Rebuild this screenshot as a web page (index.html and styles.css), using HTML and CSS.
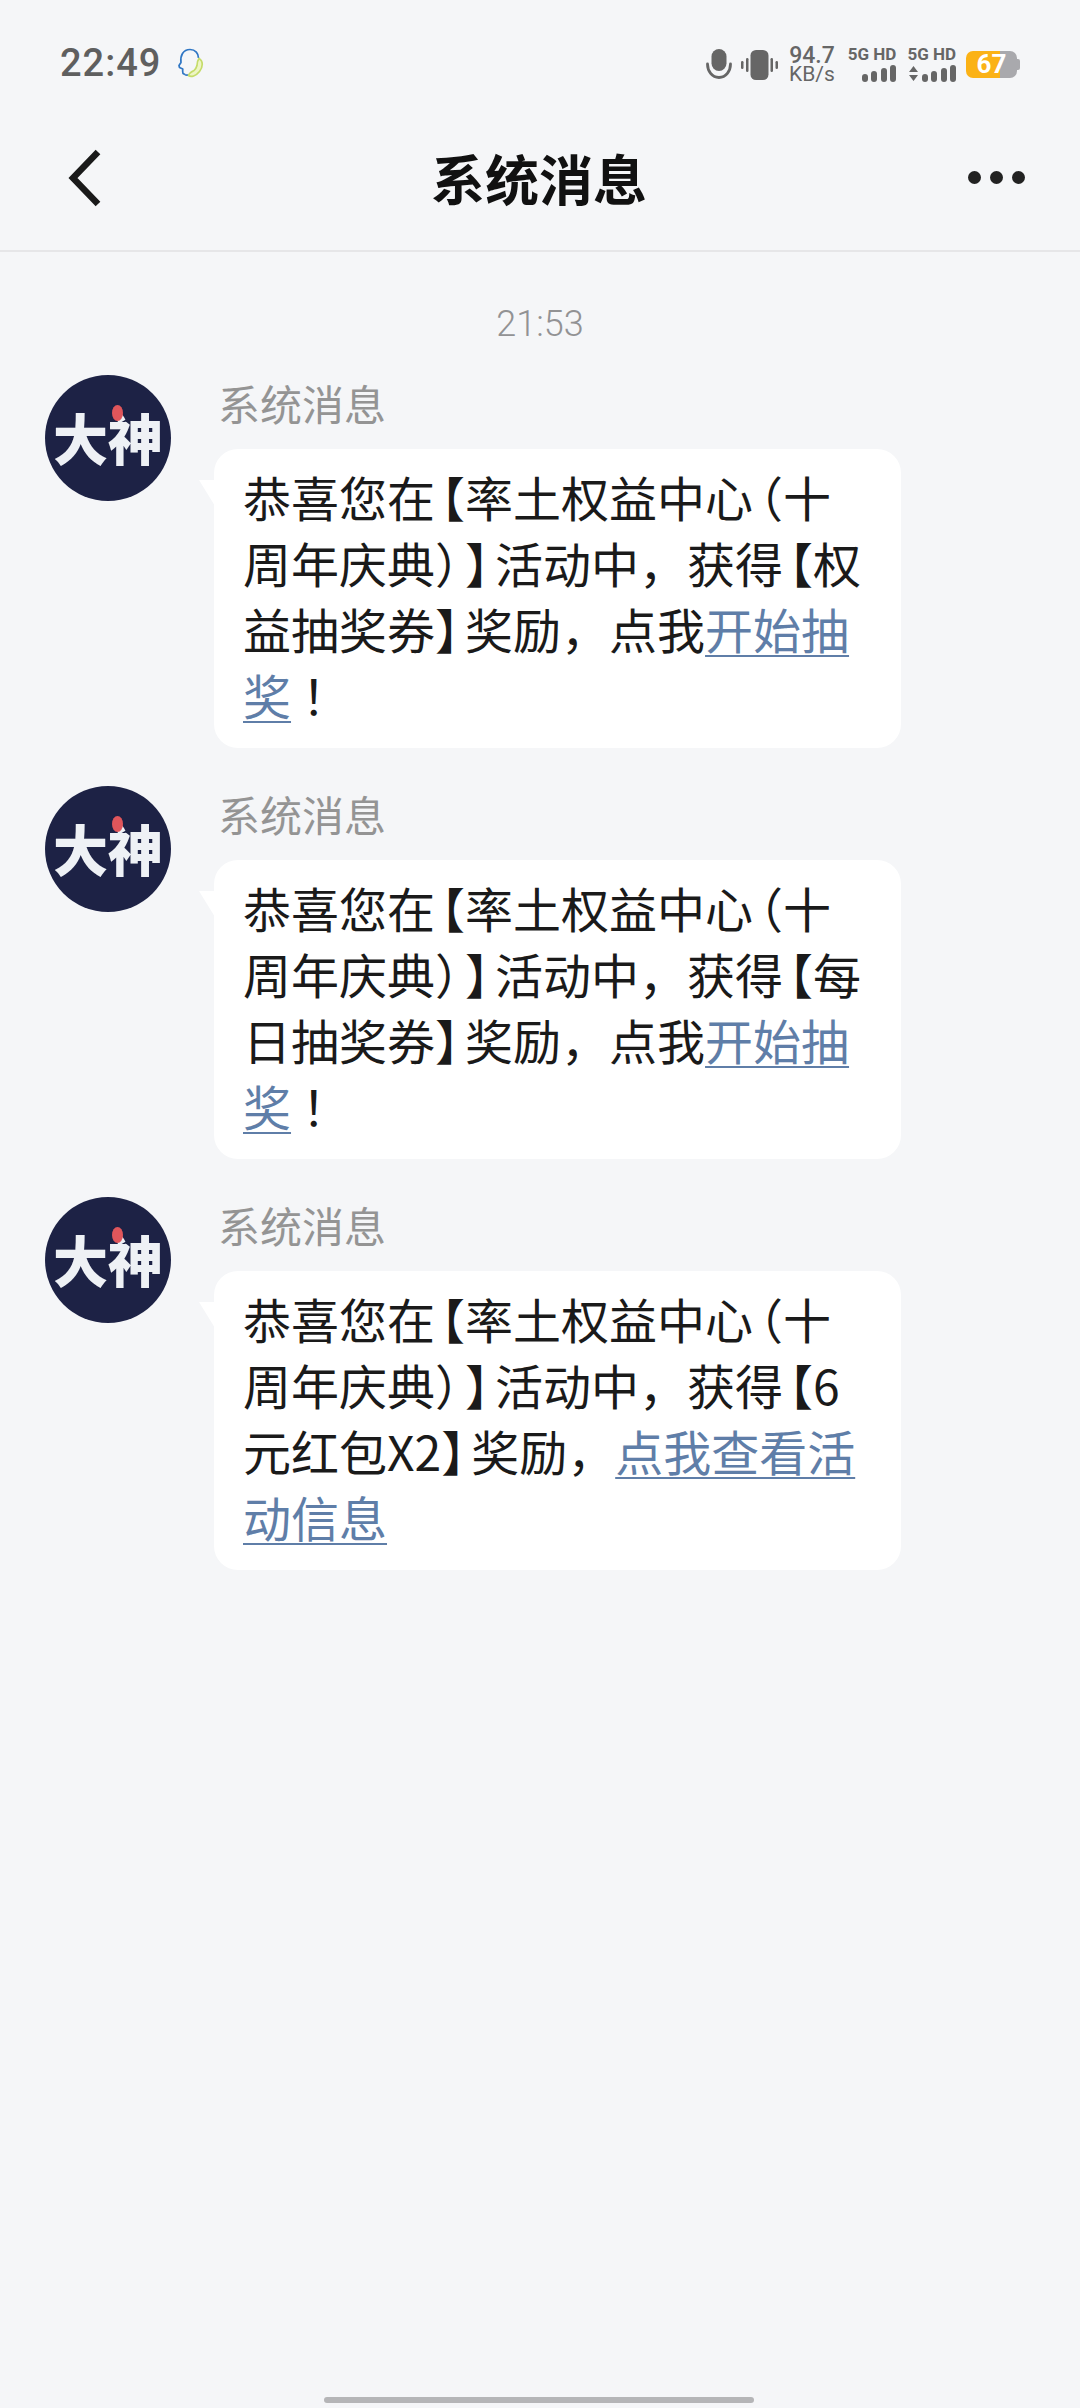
FILE: index.html
```html
<!DOCTYPE html>
<html lang="zh-CN">

<head>
    <meta charset="UTF-8">
    <title>系统消息</title>
    <link rel="stylesheet" href="styles.css">
</head>

<body>
    <div class="status">
        <div class="status-left">
            <span class="time">22:49</span>
            <svg class="qq" width="26" height="30" viewBox="0 0 26 30" fill="none">
                <path d="M7 26.500L5 25.500C4.500 24 4.500 22.500 4.800 21L1.500 19.500L1 17.500L3 14.500C2 8 5 1.500 12 1.500C17.500 1.500 20.500 5.500 20.500 10" stroke="#2f76c4" stroke-width="1.700" stroke-linejoin="round" />
                <path d="M7 26.500C8 27.500 9.500 27 11 27" stroke="#2f76c4" stroke-width="1.700" />
                <path d="M21 10.500C25.500 13 25 19 21.500 23.500C18 28 13 29.500 10.500 27.500C11 25 14 23.500 16 22.500C17.500 21 18.500 19.500 19 17.500C19 15 19.500 12.500 21 10.500Z" fill="#eef5c4" stroke="#c5dc6a" stroke-width="1.700" />
            </svg>
        </div>
        <div class="status-right">
            <svg class="mic" width="26" height="31" viewBox="0 0 26 31">
                <rect x="5.500" y="0" width="15" height="22" rx="7.500" fill="#666" />
                <path d="M1.500 15C1.500 22 6 28.500 13 28.500C20 28.500 24.500 22 24.500 15" fill="none" stroke="#666" stroke-width="2.800" stroke-linecap="round" />
            </svg>
            <svg class="vibrate" width="37" height="30" viewBox="0 0 37 30" fill="#666">
                <rect x="9.500" y="0" width="18" height="30" rx="5.500" />
                <rect x="5" y="8" width="2.500" height="14" rx="1.200" />
                <rect x="0" y="11" width="2.500" height="8" rx="1.200" />
                <rect x="29.500" y="8" width="2.500" height="14" rx="1.200" />
                <rect x="34.500" y="11" width="2.500" height="8" rx="1.200" />
            </svg>
            <div class="speed"><span>94.7</span><span>KB/s</span></div>
            <div class="sim">
                <span class="sim-name">5G HD</span>
                <svg width="34" height="17" viewBox="0 0 34 17" fill="#666">
                    <rect x="0" y="9" width="6" height="8" rx="3" />
                    <rect x="9" y="6" width="6" height="11" rx="3" />
                    <rect x="19" y="3" width="6" height="14" rx="3" />
                    <rect x="28" y="0" width="6" height="17" rx="3" />
                </svg>
            </div>
            <div class="sim">
                <span class="sim-name">5G HD</span>
                <svg width="47" height="17" viewBox="0 0 47 17" fill="#666">
                    <path d="M0 7L4.500 1L9 7ZM0 10L4.500 16L9 10Z" />
                    <rect x="13" y="9" width="6" height="8" rx="3" />
                    <rect x="22" y="6" width="6" height="11" rx="3" />
                    <rect x="32" y="3" width="6" height="14" rx="3" />
                    <rect x="41" y="0" width="6" height="17" rx="3" />
                </svg>
            </div>
            <div class="battery">
                <div class="battery-body"><span>67</span></div>
                <div class="battery-tip"></div>
            </div>
        </div>
    </div>

    <div class="nav">
        <svg class="back" width="36" height="60" viewBox="0 0 36 60" fill="none">
            <path d="M31 4L6 30L31 56" stroke="#1a1a1a" stroke-width="6.500" />
        </svg>
        <div class="title">系统消息</div>
        <div class="more"><i></i><i></i><i></i></div>
    </div>

    <div class="chat">
        <div class="stamp">21:53</div>

        <div class="msg">
            <div class="avatar"><span>大神</span><b></b></div>
            <div class="msg-body">
                <div class="name">系统消息</div>
                <div class="bubble">恭喜您在<span class="open">【</span>率土权益中心<span class="open">（</span>十周年庆典<span class="close">）</span><span class="close">】</span>活动中，获得<span class="open">【</span>权益抽奖券<span class="close">】</span>奖励，点我<a>开始抽奖</a> ！</div>
            </div>
        </div>

        <div class="msg">
            <div class="avatar"><span>大神</span><b></b></div>
            <div class="msg-body">
                <div class="name">系统消息</div>
                <div class="bubble">恭喜您在<span class="open">【</span>率土权益中心<span class="open">（</span>十周年庆典<span class="close">）</span><span class="close">】</span>活动中，获得<span class="open">【</span>每日抽奖券<span class="close">】</span>奖励，点我<a>开始抽奖</a> ！</div>
            </div>
        </div>

        <div class="msg">
            <div class="avatar"><span>大神</span><b></b></div>
            <div class="msg-body">
                <div class="name">系统消息</div>
                <div class="bubble">恭喜您在<span class="open">【</span>率土权益中心<span class="open">（</span>十周年庆典<span class="close">）</span><span class="close">】</span>活动中，获得<span class="open">【</span>6元红包X2<span class="close">】</span>奖励，<a>点我查看活动信息</a></div>
            </div>
        </div>
    </div>

    <div class="home-bar"></div>
</body>

</html>
```

FILE: styles.css
```css
* {
    padding: 0;
    margin: 0;
    box-sizing: border-box;
}

body {
    width: 1080px;
    height: 2408px;
    background: #f5f6f8;
    font-family: "Noto Sans CJK SC", "Noto Sans", sans-serif;
    color: #1a1a1a;
    display: flex;
    flex-direction: column;
    overflow: hidden;
}

/* 状态栏 */
.status {
    height: 126px;
    padding: 0 60px 0 60px;
    display: flex;
    align-items: center;
    justify-content: space-between;
    color: #666;
}

.status-left {
    display: flex;
    align-items: center;
    gap: 17px;
}

.time {
    font-family: Roboto, sans-serif;
    font-size: 38px;
    font-weight: 500;
    letter-spacing: 1px;
    color: #5f5f5f;
}

.status-right {
    display: flex;
    align-items: center;
    padding-top: 3px;
}

.vibrate {
    margin-left: 9px;
}

.speed {
    margin-left: 11px;
    width: 46px;
    display: flex;
    flex-direction: column;
    align-items: flex-end;
    font-family: Roboto, sans-serif;
    font-size: 23px;
    line-height: 18px;
    font-weight: 500;
}

.speed span:last-child {
    font-size: 21px;
    font-weight: 400;
}

.sim {
    margin-left: 13px;
    display: flex;
    flex-direction: column;
    align-items: flex-end;
    gap: 3px;
}

.sim + .sim {
    margin-left: 11px;
}

.sim-name {
    font-family: Roboto, sans-serif;
    font-size: 17px;
    line-height: 15px;
    font-weight: 700;
    white-space: nowrap;
}

.battery {
    margin-left: 10px;
    display: flex;
    align-items: center;
}

.battery-body {
    width: 51px;
    height: 27px;
    border-radius: 7px;
    background: linear-gradient(to right, #fbb216 0, #fbb216 66%, #a9a9ad 66%);
    display: flex;
    align-items: center;
    justify-content: center;
}

.battery-body span {
    font-family: Roboto, sans-serif;
    font-size: 26px;
    font-weight: 700;
    line-height: 27px;
    color: #fff;
}

.battery-tip {
    width: 3px;
    height: 11px;
    background: #a9a9ad;
    border-radius: 0 2px 2px 0;
}

/* 标题栏 */
.nav {
    height: 126px;
    padding: 0 55px 21px 67px;
    border-bottom: 2px solid #e6e6e8;
    display: grid;
    grid-template-columns: 1fr auto 1fr;
    align-items: center;
}

.title {
    font-size: 54px;
    font-weight: 700;
    color: #111;
    line-height: 60px;
    transform: translateX(-7px);
}

.more {
    display: flex;
    gap: 9px;
    justify-self: end;
}

.more i {
    width: 13px;
    height: 13px;
    border-radius: 50%;
    background: #222;
}

/* 消息列表 */
.chat {
    flex: 1;
    padding-top: 47px;
}

.stamp {
    height: 50px;
    line-height: 50px;
    text-align: center;
    font-family: Roboto, sans-serif;
    font-size: 36px;
    font-weight: 300;
    color: #929294;
    margin-bottom: 26px;
}

.msg {
    display: flex;
    padding-left: 45px;
    margin-bottom: 38px;
}

.avatar {
    width: 126px;
    height: 126px;
    border-radius: 50%;
    background: #1d2245;
    display: flex;
    align-items: center;
    justify-content: center;
    position: relative;
    flex-shrink: 0;
}

.avatar span {
    font-size: 55px;
    font-weight: 900;
    line-height: 56px;
    color: #eef1f5;
    margin-top: -5px;
}

.avatar b {
    position: absolute;
    left: 67px;
    top: 30px;
    width: 11px;
    height: 16px;
    border-radius: 50%;
    background: #e0565b;
}

.msg-body {
    margin-left: 43px;
}

.name {
    height: 74px;
    padding: 2px 0 0 4px;
    font-size: 42px;
    line-height: 52px;
    color: #949494;
}

.bubble {
    width: 687px;
    padding: 14px 28px 21px 29px;
    background: #fff;
    border-radius: 24px;
    font-size: 48px;
    line-height: 66px;
    color: #1a1a1a;
    position: relative;
}

/* 气泡小尾巴 */
.bubble::before {
    content: "";
    position: absolute;
    left: -15px;
    top: 31px;
    width: 16px;
    height: 26px;
    background: #fff;
    clip-path: polygon(0 0, 100% 0, 100% 100%);
}

.bubble a {
    color: #5f7ea8;
    text-decoration: underline;
    text-underline-offset: 6px;
    text-decoration-thickness: 2px;
}

/* 标点收窄 */
.open,
.close {
    font-feature-settings: "halt";
}

.open {
    padding-left: 6px;
}

.close {
    padding-right: 6px;
}

.home-bar {
    position: absolute;
    left: 324px;
    top: 2397px;
    width: 430px;
    height: 6px;
    border-radius: 3px;
    background: #b5b5b7;
}
```
